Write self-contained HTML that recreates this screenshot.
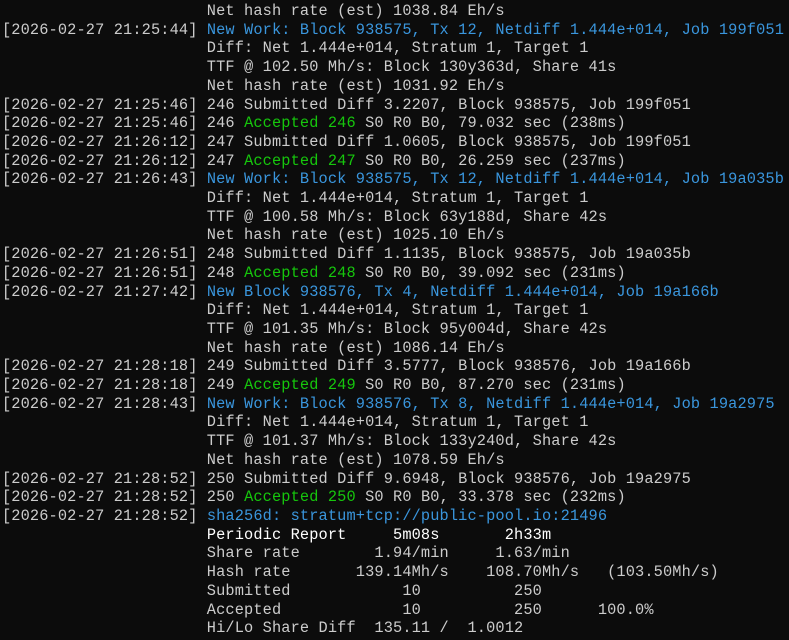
<!DOCTYPE html>
<html><head><meta charset="utf-8"><style>
html,body{margin:0;padding:0;background:#0c0c0c;width:789px;height:640px;overflow:hidden}
pre{margin:0;padding:2px 0 0 2px;font-family:"Liberation Mono",monospace;font-size:15.3px;letter-spacing:0.13px;line-height:18.7px;color:#cccccc}
.b{color:#3a96dd}.g{color:#16c60c}.w{color:#ffffff}
</style></head><body><pre>                      Net hash rate (est) 1038.84 Eh/s
[2026-02-27 21:25:44] <span class="b">New Work: Block 938575, Tx 12, Netdiff 1.444e+014, Job 199f051</span>
                      Diff: Net 1.444e+014, Stratum 1, Target 1
                      TTF @ 102.50 Mh/s: Block 130y363d, Share 41s
                      Net hash rate (est) 1031.92 Eh/s
[2026-02-27 21:25:46] 246 Submitted Diff 3.2207, Block 938575, Job 199f051
[2026-02-27 21:25:46] 246 <span class="g">Accepted 246</span> S0 R0 B0, 79.032 sec (238ms)
[2026-02-27 21:26:12] 247 Submitted Diff 1.0605, Block 938575, Job 199f051
[2026-02-27 21:26:12] 247 <span class="g">Accepted 247</span> S0 R0 B0, 26.259 sec (237ms)
[2026-02-27 21:26:43] <span class="b">New Work: Block 938575, Tx 12, Netdiff 1.444e+014, Job 19a035b</span>
                      Diff: Net 1.444e+014, Stratum 1, Target 1
                      TTF @ 100.58 Mh/s: Block 63y188d, Share 42s
                      Net hash rate (est) 1025.10 Eh/s
[2026-02-27 21:26:51] 248 Submitted Diff 1.1135, Block 938575, Job 19a035b
[2026-02-27 21:26:51] 248 <span class="g">Accepted 248</span> S0 R0 B0, 39.092 sec (231ms)
[2026-02-27 21:27:42] <span class="b">New Block 938576, Tx 4, Netdiff 1.444e+014, Job 19a166b</span>
                      Diff: Net 1.444e+014, Stratum 1, Target 1
                      TTF @ 101.35 Mh/s: Block 95y004d, Share 42s
                      Net hash rate (est) 1086.14 Eh/s
[2026-02-27 21:28:18] 249 Submitted Diff 3.5777, Block 938576, Job 19a166b
[2026-02-27 21:28:18] 249 <span class="g">Accepted 249</span> S0 R0 B0, 87.270 sec (231ms)
[2026-02-27 21:28:43] <span class="b">New Work: Block 938576, Tx 8, Netdiff 1.444e+014, Job 19a2975</span>
                      Diff: Net 1.444e+014, Stratum 1, Target 1
                      TTF @ 101.37 Mh/s: Block 133y240d, Share 42s
                      Net hash rate (est) 1078.59 Eh/s
[2026-02-27 21:28:52] 250 Submitted Diff 9.6948, Block 938576, Job 19a2975
[2026-02-27 21:28:52] 250 <span class="g">Accepted 250</span> S0 R0 B0, 33.378 sec (232ms)
[2026-02-27 21:28:52] <span class="b">sha256d: stratum+tcp://public-pool.io:21496</span>
                      <span class="w">Periodic Report     5m08s       2h33m</span>
                      Share rate        1.94/min     1.63/min
                      Hash rate       139.14Mh/s    108.70Mh/s   (103.50Mh/s)
                      Submitted            10          250
                      Accepted             10          250      100.0%
                      Hi/Lo Share Diff  135.11 /  1.0012
</pre></body></html>
